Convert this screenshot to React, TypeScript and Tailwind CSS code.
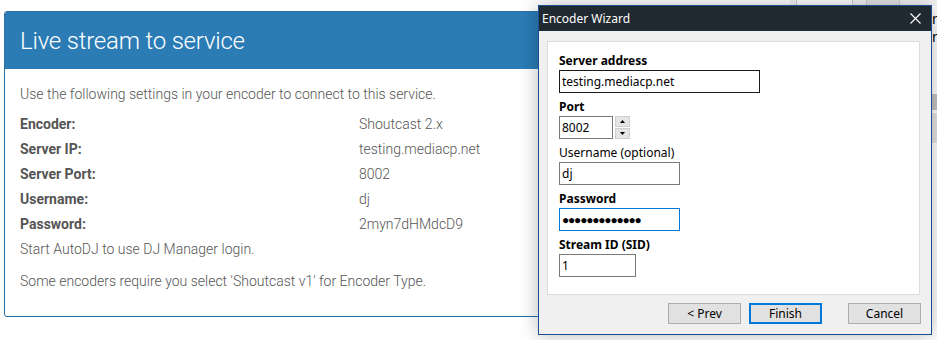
const rows = [
  { label: 'Encoder:', value: 'Shoutcast 2.x' },
  { label: 'Server IP:', value: 'testing.mediacp.net' },
  { label: 'Server Port:', value: '8002' },
  { label: 'Username:', value: 'dj' },
  { label: 'Password:', value: '2myn7dHMdcD9' },
];

const winFont = { fontFamily: '"Noto Sans", "Open Sans", sans-serif' };

function Field({ label, bold = true, children }: { label: string; bold?: boolean; children: React.ReactNode }) {
  return (
    <div className="h-[46px]">
      <div className={`h-[18px] leading-[18px] text-[12px] text-black ${bold ? 'font-bold' : ''}`}>{label}</div>
      <div className="flex items-start">{children}</div>
    </div>
  );
}

export default function App() {
  return (
    <div className="relative w-[937px] h-[340px] overflow-hidden bg-white" style={{ fontFamily: 'Roboto, "Liberation Sans", sans-serif' }}>
      {/* Web card */}
      <div className="pt-[11px] pl-[4px]">
        <div className="w-[600px] border border-[#2b6fa6] rounded-[3px] overflow-hidden">
          <div className="h-[57px] bg-[#2b7bb5] px-[15px] flex items-center">
            <h1 className="text-[24px] font-light text-white tracking-[-0.2px]">Live stream to service</h1>
          </div>
          <div className="px-[15px] pt-[15px] pb-[25px] text-[14px] font-light text-[#555]">
            <p className="leading-[20px]">Use the following settings in your encoder to connect to this service.</p>
            <div className="mt-[8px]">
              {rows.map((r) => (
                <div key={r.label} className="grid grid-cols-[339px_1fr] h-[25px] items-center">
                  <span className="font-bold text-[#555]">{r.label}</span>
                  <span>{r.value}</span>
                </div>
              ))}
            </div>
            <p className="mt-[2px] leading-[20px]">Start AutoDJ to use DJ Manager login.</p>
            <p className="mt-[12px] leading-[20px]">Some encoders require you select 'Shoutcast v1' for Encoder Type.</p>
          </div>
        </div>
      </div>

      {/* Window behind, peeking out on the right */}
      <div className="absolute left-[790px] top-0 w-[147px] h-[6px] bg-[#f3f3f3] flex">
        <div className="w-[7px] border-r border-[#cfcfcf]" />
        <div className="w-[56px] border-r border-[#cfcfcf] bg-white" />
        <div className="w-[14px] border-r border-[#cfcfcf]" />
        <div className="w-[33px] border-r border-[#cfcfcf] bg-[#e6e6e6]" />
      </div>
      <div className="absolute left-[932px] top-[6px] w-[5px] h-[334px] text-[14px] leading-[18px] text-black" style={winFont}>
        <div className="pt-[4px]">n</div>
        <div>n</div>
        <div className="mt-[48px] h-[16px] bg-[#c4c4c4]" />
        <div className="mt-[3px] h-[30px] bg-[#e3e3e3]" />
      </div>

      {/* Encoder Wizard dialog */}
      <div
        className="absolute left-[538px] top-[5px] w-[394px] h-[330px] border border-[#1b4f95] bg-[#f0f0f0] shadow-[0_0_18px_rgba(0,0,0,0.28)] flex flex-col"
        style={winFont}
      >
        <div className="h-[25px] bg-[#1f292f] flex items-center justify-between pl-[3px] pr-[10px]">
          <span className="text-[12px] text-white">Encoder Wizard</span>
          <svg width="11" height="11" viewBox="0 0 11 11">
            <path d="M0.5 0.5L10.5 10.5M10.5 0.5L0.5 10.5" stroke="#fff" strokeWidth="1.1" />
          </svg>
        </div>
        <div className="ml-[8px] mt-[10px] w-[373px] h-[254px] bg-white border border-[#dcdcdc] pl-[11px] pt-[10px]">
          <Field label="Server address">
            <div className="w-[201px] h-[23px] border border-[#1a1a1a] px-[2px] text-[12px] leading-[21px] text-black">testing.mediacp.net</div>
          </Field>
          <Field label="Port">
            <div className="w-[54px] h-[23px] border border-[#7a7a7a] px-[2px] text-[12px] leading-[21px] text-black">8002</div>
            <div className="ml-[2px] w-[15px] h-[23px] flex flex-col gap-[1px]">
              <div className="h-[11px] bg-[#e5e5e5] border border-[#d0d0d0] flex items-center justify-center">
                <svg width="5" height="3" viewBox="0 0 5 3"><path d="M2.5 0L5 3H0z" fill="#000" /></svg>
              </div>
              <div className="h-[11px] bg-[#e5e5e5] border border-[#d0d0d0] flex items-center justify-center">
                <svg width="5" height="3" viewBox="0 0 5 3"><path d="M0 0H5L2.5 3z" fill="#000" /></svg>
              </div>
            </div>
          </Field>
          <Field label="Username (optional)" bold={false}>
            <div className="w-[121px] h-[23px] border border-[#7a7a7a] px-[2px] text-[12px] leading-[21px] text-black">dj</div>
          </Field>
          <Field label="Password">
            <div className="w-[121px] h-[23px] border border-[#0078d7] px-[2px] text-[12px] leading-[21px] text-black tracking-[-1.2px]">●●●●●●●●●●●●●</div>
          </Field>
          <Field label="Stream ID (SID)">
            <div className="w-[77px] h-[23px] border border-[#7a7a7a] px-[2px] text-[12px] leading-[21px] text-black">1</div>
          </Field>
        </div>
        <div className="flex mt-[8px] pl-[129px] text-[12px] text-black">
          <button className="w-[73px] h-[21px] bg-[#e1e1e1] border border-[#adadad] leading-[19px]">&lt; Prev</button>
          <button className="ml-[8px] w-[73px] h-[21px] bg-[#e1e1e1] border-2 border-[#0078d7] leading-[17px]">Finish</button>
          <button className="ml-[26px] w-[73px] h-[21px] bg-[#e1e1e1] border border-[#adadad] leading-[19px]">Cancel</button>
        </div>
      </div>
    </div>
  );
}
